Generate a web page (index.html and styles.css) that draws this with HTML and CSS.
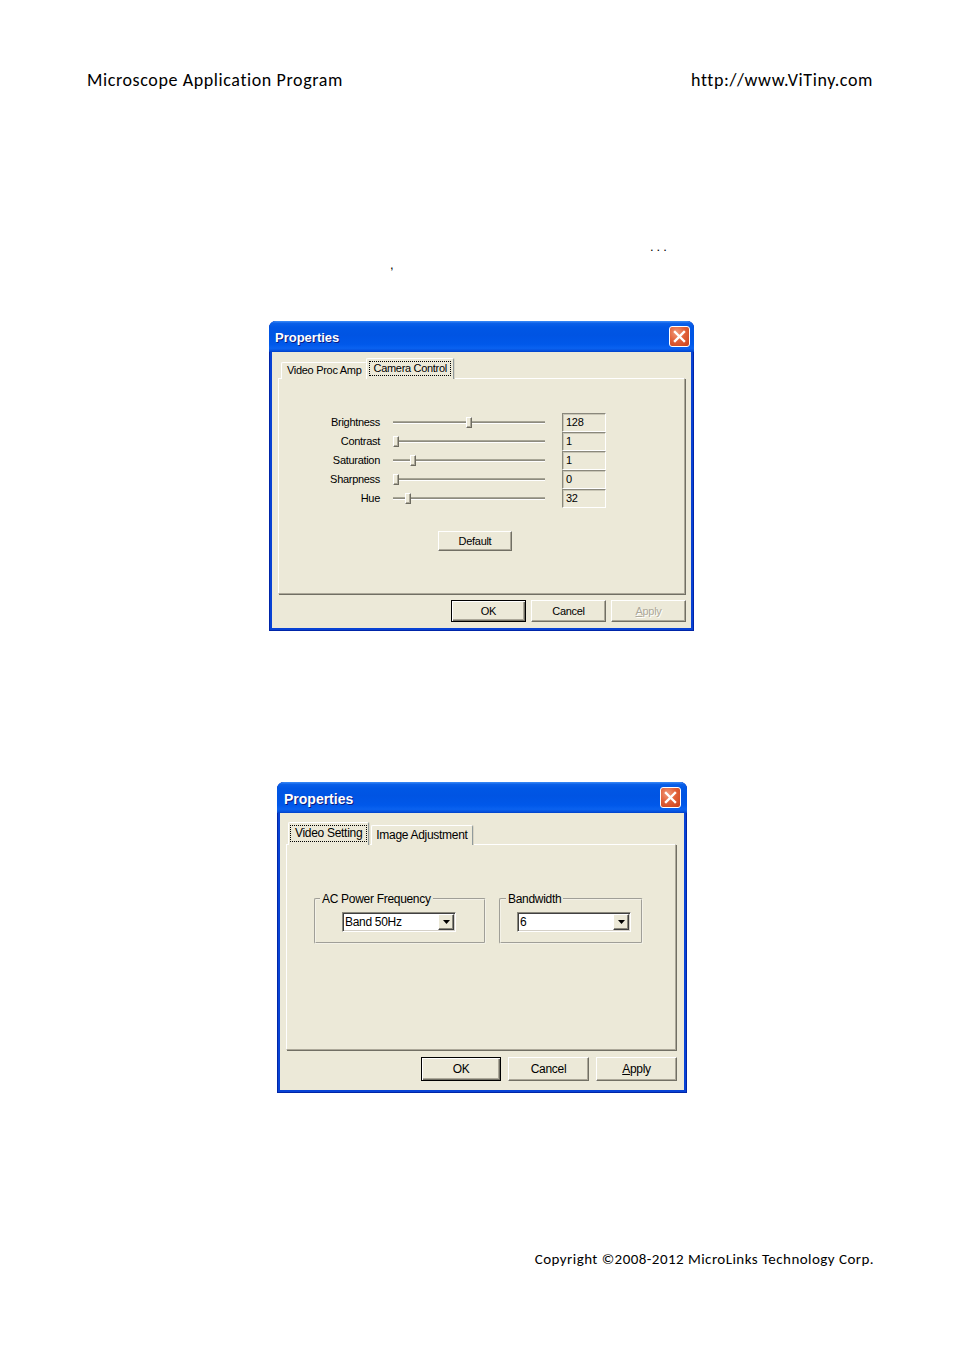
FILE: index.html
```html
<!DOCTYPE html>
<html lang="en">
<head>
<meta charset="utf-8">
<title>Microscope Application Program</title>
<link rel="stylesheet" href="styles.css">
</head>
<body>
<div class="page">
  <header class="doc-header">
    <span>Microscope Application Program</span>
    <span>http://www.ViTiny.com</span>
  </header>

  <div class="note">
    <p class="note-l1">...</p>
    <p class="note-l2">,</p>
  </div>

  <section class="dialog dlg1">
    <div class="titlebar">
      <span class="title">Properties</span>
      <span class="close">
        <svg viewBox="0 0 21 21" width="21" height="21"><path d="M6 6 L15 15 M15 6 L6 15" stroke="#fff" stroke-width="2.4" stroke-linecap="square"/></svg>
      </span>
    </div>
    <div class="dlg-body">
      <div class="tabs">
        <div class="tab">Video Proc Amp</div>
        <div class="tab active"><span class="focus">Camera Control</span></div>
      </div>
      <div class="panel">
        <div class="ctrl-grid">
          <span class="lbl">Brightness</span>
          <div class="slider"><div class="track"></div><div class="thumb" style="left:73px"></div></div>
          <div class="edit">128</div>

          <span class="lbl">Contrast</span>
          <div class="slider"><div class="track"></div><div class="thumb" style="left:0px"></div></div>
          <div class="edit">1</div>

          <span class="lbl">Saturation</span>
          <div class="slider"><div class="track"></div><div class="thumb" style="left:17px"></div></div>
          <div class="edit">1</div>

          <span class="lbl">Sharpness</span>
          <div class="slider"><div class="track"></div><div class="thumb" style="left:0px"></div></div>
          <div class="edit">0</div>

          <span class="lbl">Hue</span>
          <div class="slider"><div class="track"></div><div class="thumb" style="left:12px"></div></div>
          <div class="edit">32</div>
        </div>
        <button class="btn btn-reset">Default</button>
      </div>
      <div class="btn-row">
        <button class="btn btn-primary">OK</button>
        <button class="btn">Cancel</button>
        <button class="btn disabled"><u>A</u>pply</button>
      </div>
    </div>
  </section>

  <section class="dialog dlg2">
    <div class="titlebar">
      <span class="title">Properties</span>
      <span class="close">
        <svg viewBox="0 0 21 21" width="21" height="21"><path d="M6 6 L15 15 M15 6 L6 15" stroke="#fff" stroke-width="2.4" stroke-linecap="square"/></svg>
      </span>
    </div>
    <div class="dlg-body">
      <div class="tabs">
        <div class="tab active"><span class="focus">Video Setting</span></div>
        <div class="tab">Image Adjustment</div>
      </div>
      <div class="panel">
        <div class="groups">
          <fieldset class="group g-ac">
            <legend>AC Power Frequency</legend>
            <div class="combo"><span class="combo-val">Band 50Hz</span><span class="combo-btn"><svg viewBox="0 0 7 4" width="7" height="4"><path d="M0 0 H7 L3.5 4 Z" fill="#000"/></svg></span></div>
          </fieldset>
          <fieldset class="group g-bw">
            <legend>Bandwidth</legend>
            <div class="combo"><span class="combo-val">6</span><span class="combo-btn"><svg viewBox="0 0 7 4" width="7" height="4"><path d="M0 0 H7 L3.5 4 Z" fill="#000"/></svg></span></div>
          </fieldset>
        </div>
      </div>
      <div class="btn-row">
        <button class="btn btn-primary">OK</button>
        <button class="btn">Cancel</button>
        <button class="btn"><u>A</u>pply</button>
      </div>
    </div>
  </section>

  <footer class="doc-footer">Copyright ©2008-2012 MicroLinks Technology Corp.</footer>
</div>
</body>
</html>
```

FILE: styles.css
```css
* { box-sizing: border-box; }

html, body {
  margin: 0;
  padding: 0;
  background: #fff;
}

.page {
  width: 954px;
  height: 1350px;
  padding-top: 70px;
  font-family: Carlito, Lato, "Liberation Sans", sans-serif;
  color: #000;
}

.doc-header {
  display: flex;
  justify-content: space-between;
  padding: 0 81px 0 87px;
  font-size: 18px;
  line-height: 20px;
  letter-spacing: 0.6px;
}

.note {
  margin-top: 147px;
  font-family: "Liberation Sans", sans-serif;
  font-size: 13px;
  line-height: 20px;
}
.note p { margin: 0; }
.note-l1 { padding-left: 650px; letter-spacing: 3px; }
.note-l2 { padding-left: 390px; margin-top: -2px !important; }

/* ---------- dialog frame ---------- */
.dialog {
  background: #0842d4;
  border-radius: 7px 7px 0 0;
  padding: 0 3px 3px;
  font-family: "Liberation Sans", Tahoma, sans-serif;
  color: #000;
  box-shadow: inset 1px 0 0 #0025a8, inset -1px 0 0 #0025a8, inset 0 -1px 0 #0025a8;
}

.dlg1 {
  margin: 46px 0 0 269px;
  width: 425px;
  font-size: 11px;
  letter-spacing: -0.3px;
}

.dlg2 {
  margin: 151px 0 0 277px;
  width: 410px;
  font-size: 12px;
  letter-spacing: -0.3px;
}

.titlebar {
  margin: 0 -3px;
  height: 31px;
  border-radius: 7px 7px 0 0;
  display: flex;
  align-items: center;
  justify-content: space-between;
  padding: 0 4px 0 6px;
  background: linear-gradient(#3b8cf8 0%, #0a5fe8 8%, #0057e5 20%, #0054e3 45%, #0058ea 75%, #0a62f0 88%, #0550dc 96%, #0040c8 100%);
}
.dlg2 .titlebar { padding: 0 6px 0 7px; }

.title {
  font-family: "Liberation Sans", sans-serif;
  font-weight: bold;
  font-size: 13px;
  letter-spacing: 0;
  color: #fff;
  text-shadow: 1px 1px 0 #0a1a80;
  padding-top: 2px;
}
.dlg2 .title { font-size: 14px; }

.close {
  width: 21px;
  height: 21px;
  border: 1px solid #fff;
  border-radius: 3px;
  background: radial-gradient(circle at 35% 30%, #f19a7c 0%, #e2623a 45%, #c8401b 100%);
  display: flex;
  align-items: center;
  justify-content: center;
}
.close svg { display: block; margin: -1px; }

.dlg-body {
  background: #ece9d8;
  padding: 6px 5px 6px 6px;
}
.dlg2 .dlg-body { padding: 9px 7px 9px 6px; }

/* ---------- tabs ---------- */
.tabs {
  display: flex;
  align-items: flex-end;
  padding-left: 3px;
  margin-bottom: -1px;
  position: relative;
  z-index: 1;
}

.tab {
  height: 17px;
  padding: 0 5px 2px;
  display: flex;
  align-items: center;
  background: #ece9d8;
  border-top: 1px solid #fff;
  border-left: 1px solid #fff;
  border-right: 1px solid #919b9c;
  box-shadow: 1px 0 0 #d8d4c4;
  border-radius: 2px 2px 0 0;
  white-space: nowrap;
}
.tab.active {
  height: 21px;
  padding: 0 2px 2px;
  margin: 0 -1px 0 -1px;
  z-index: 2;
  position: relative;
}
.focus {
  border: 1px dotted #000;
  padding: 0 3px;
  line-height: 13px;
}

.dlg2 .tab { height: 20px; padding: 0 4px 1px; }
.dlg2 .tab.active { height: 23px; padding: 0 1px 2px; margin-right: 2px; }
.dlg2 .focus { line-height: 15px; padding: 0 4px; }

.panel {
  background: #ece9d8;
  border-top: 1px solid #fff;
  border-left: 1px solid #fff;
  border-right: 1px solid #aca899;
  border-bottom: 1px solid #aca899;
  box-shadow: 1px 1px 0 #716f64;
}
.dlg1 .panel {
  width: 407px;
  height: 216px;
  padding: 34px 0 0 41px;
}
.dlg2 .panel {
  width: 390px;
  height: 206px;
  padding: 47px 0 0 27px;
}

/* ---------- dialog 1 controls ---------- */
.ctrl-grid {
  display: grid;
  grid-template-columns: 60px 152px 44px;
  grid-auto-rows: 19px;
  column-gap: 13px;
}
.ctrl-grid .edit { margin-left: 4px; }
.lbl {
  text-align: right;
  align-self: center;
  white-space: nowrap;
  padding-bottom: 2px;
}

.slider {
  position: relative;
  display: flex;
  align-items: center;
}
.track {
  width: 100%;
  height: 3px;
  background: #8d8b7f;
  border-top: 1px solid #a7a595;
  border-bottom: 1px solid #fff;
}
.thumb {
  position: absolute;
  top: 4px;
  width: 6px;
  height: 11px;
  background: #ece9d8;
  border-top: 1px solid #fff;
  border-left: 1px solid #fff;
  border-right: 1px solid #6d6b60;
  border-bottom: 1px solid #6d6b60;
  box-shadow: inset -1px -1px 0 #aca899;
}

.edit {
  width: 44px;
  height: 19px;
  padding-left: 3px;
  line-height: 17px;
  background: #ece9d8;
  border-top: 1px solid #8a887c;
  border-left: 1px solid #8a887c;
  border-right: 1px solid #fff;
  border-bottom: 1px solid #fff;
  box-shadow: inset 1px 1px 0 #c9c6b6;
}

/* ---------- buttons ---------- */
.btn {
  font: inherit;
  letter-spacing: inherit;
  color: #000;
  background: #ece9d8;
  border-top: 1px solid #fff;
  border-left: 1px solid #fff;
  border-right: 1px solid #716f64;
  border-bottom: 1px solid #716f64;
  box-shadow: inset -1px -1px 0 #aca899;
  padding: 0;
  margin: 0;
  text-align: center;
}
.btn-primary {
  border: 1px solid #000;
  box-shadow: inset 1px 1px 0 #fff, inset -1px -1px 0 #716f64, inset -2px -2px 0 #aca899;
}
.btn.disabled {
  color: #aca899;
  text-shadow: 1px 1px 0 #fff;
}

.btn-reset {
  display: block;
  width: 74px;
  height: 20px;
  margin: 23px 0 0 118px;
}

.btn-row {
  display: flex;
  justify-content: flex-end;
  gap: 5px;
}
.dlg1 .btn-row { margin-top: 6px; }
.dlg1 .btn-row .btn { width: 75px; height: 22px; }

.dlg2 .btn-row { margin-top: 7px; gap: 7px; }
.dlg2 .btn-row .btn { width: 81px; height: 24px; }
.dlg2 .btn-row .btn-primary { width: 80px; }

/* ---------- dialog 2 controls ---------- */
.groups {
  display: flex;
  gap: 13px;
}
.group {
  margin: 0;
  padding: 6px 0 10px 0;
  border: 2px groove #f4f2e8;
  border-radius: 2px;
  min-width: 0;
}
.g-ac { width: 172px; }
.g-bw { width: 144px; }
.g-ac .combo { margin-left: 26px; }
.g-bw .combo { margin-left: 16px; }
.group legend {
  padding: 0 2px;
  margin-left: 4px;
  line-height: 14px;
}
.g-bw legend { margin-left: 5px; }

.combo {
  width: 114px;
  height: 20px;
  background: #fff;
  border-top: 1px solid #8a887c;
  border-left: 1px solid #8a887c;
  border-right: 1px solid #fff;
  border-bottom: 1px solid #fff;
  box-shadow: inset 1px 1px 0 #404040, inset -1px -1px 0 #d4d0c8;
  display: flex;
  align-items: center;
  padding: 1px 1px 1px 2px;
}
.combo-val {
  flex: 1;
  line-height: 16px;
}
.combo-btn {
  width: 16px;
  height: 16px;
  background: #ece9d8;
  border-top: 1px solid #fff;
  border-left: 1px solid #fff;
  border-right: 1px solid #404040;
  border-bottom: 1px solid #404040;
  box-shadow: inset -1px -1px 0 #8a887c;
  display: flex;
  align-items: center;
  justify-content: center;
}
.combo-btn svg { display: block; }

/* ---------- footer ---------- */
.doc-footer {
  margin-top: 156px;
  text-align: right;
  padding-right: 80px;
  font-size: 15px;
  line-height: 20px;
  letter-spacing: 0.45px;
}
```
